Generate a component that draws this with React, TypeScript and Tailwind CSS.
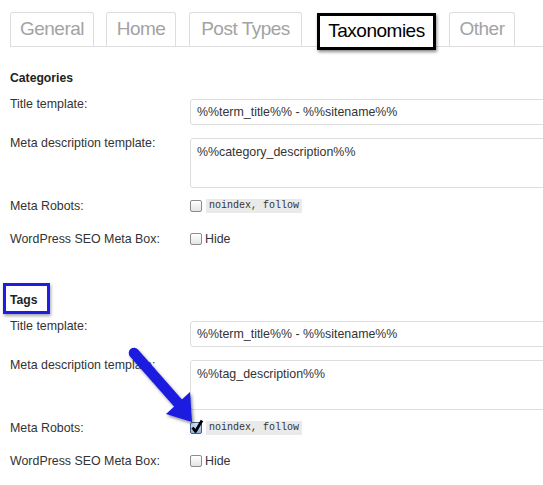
import React from 'react';

type TabDef = { label: string; width: string; gap: string; active?: boolean };

const TABS: TabDef[] = [
  { label: 'General', width: 'w-[84px]', gap: 'ml-0' },
  { label: 'Home', width: 'w-[70px]', gap: 'ml-[12px]' },
  { label: 'Post Types', width: 'w-[113px]', gap: 'ml-[13px]' },
  { label: 'Taxonomies', width: 'w-[119px]', gap: 'ml-[15px]', active: true },
  { label: 'Other', width: 'w-[66px]', gap: 'ml-[13px]' },
];

// タブ
const Tab: React.FC<{ tab: TabDef }> = ({ tab }) => {
  if (tab.active) {
    return (
      <div
        className={`${tab.width} ${tab.gap} relative z-10 -mb-[4px] h-[37px] shrink-0 flex items-center justify-center bg-white border-[3px] border-black text-black text-[19px] tracking-[-0.5px] shadow-[1px_2px_3px_rgba(0,0,0,0.45)]`}
      >
        {tab.label}
      </div>
    );
  }
  return (
    <div
      className={`${tab.width} ${tab.gap} h-[34px] shrink-0 flex items-center justify-center border border-b-0 border-[#dddddd] rounded-t-[3px] bg-white text-[#a3a3a3] text-[19px] tracking-[-0.5px]`}
    >
      {tab.label}
    </div>
  );
};

// チェックボックス（Mac風）
const Checkbox: React.FC<{ checked?: boolean }> = ({ checked }) => {
  if (checked) {
    return (
      <span className="relative w-3 h-3 shrink-0 rounded-[2px] border border-[#3f5f8a] bg-linear-to-b from-[#d3e4f7] to-[#8fb4e0]">
        <svg className="absolute -left-[1px] -top-[4px] w-[14px] h-[15px]" viewBox="0 0 14 15">
          <path d="M2.5 8.5 L5.5 12.5 L12 1.5" fill="none" stroke="#000" strokeWidth="2.8" strokeLinejoin="round" />
        </svg>
      </span>
    );
  }
  return (
    <span className="w-3 h-3 shrink-0 rounded-[2px] border border-[#8c8c8c] bg-linear-to-b from-white to-[#e4e4e4]" />
  );
};

const Label: React.FC<{ children: React.ReactNode }> = ({ children }) => (
  <div className="w-[180px] shrink-0 text-[12.4px] leading-4 text-[#333]">{children}</div>
);

interface SectionProps {
  title: string;
  description: string;
  robotsChecked?: boolean;
  highlight?: boolean;
  className?: string;
}

const Section: React.FC<SectionProps> = ({ title, description, robotsChecked, highlight, className }) => (
  <div className={className}>
    <h3 className="h-4 text-[12.2px] leading-4 font-bold text-[#222]">
      <span className="relative">
        {title}
        {highlight && (
          <span className="absolute -left-[7px] -top-[10px] w-[47px] h-[31px] border-[3px] border-[#1d1de6] shadow-[1px_2px_3px_rgba(0,0,0,0.35)]" />
        )}
      </span>
    </h3>

    <div className="mt-[10px] flex items-start">
      <Label>Title template:</Label>
      <input
        readOnly
        value="%%term_title%% - %%sitename%%"
        className="mt-[3px] w-[400px] h-[26px] shrink-0 px-[6px] border border-[#dddddd] rounded-[3px] bg-white text-[12.4px] text-[#333] outline-none"
      />
    </div>

    <div className="mt-[10px] flex items-start">
      <Label>Meta description template:</Label>
      <textarea
        readOnly
        value={description}
        className="mt-[3px] w-[400px] h-[50px] shrink-0 px-[6px] pt-[5px] border border-[#dddddd] rounded-[3px] bg-white text-[12.4px] leading-4 text-[#333] resize-none outline-none"
      />
    </div>

    <div className="mt-[10px] flex items-center">
      <Label>Meta Robots:</Label>
      <div className="flex items-center gap-[4px]">
        <Checkbox checked={robotsChecked} />
        <code className="px-[3px] h-[14px] leading-[14px] bg-[#eaeaea] text-[10px] text-[#333] font-['Liberation_Mono',monospace]">
          noindex, follow
        </code>
      </div>
    </div>

    <div className="mt-[17px] flex items-center">
      <Label>WordPress SEO Meta Box:</Label>
      <div className="flex items-center gap-[3px]">
        <Checkbox />
        <span className="text-[12.4px] leading-4 text-[#333]">Hide</span>
      </div>
    </div>
  </div>
);

export default function App() {
  return (
    <div className="relative w-[543px] h-[485px] overflow-hidden bg-white font-['Liberation_Sans',Arial,sans-serif] text-[#333]">
      {/* タブバー */}
      <div className="mt-[12px] ml-[10px] flex items-end border-b border-[#dddddd]">
        {TABS.map((tab) => (
          <Tab key={tab.label} tab={tab} />
        ))}
      </div>

      {/* 設定フォーム */}
      <div className="pl-[10px]">
        <Section className="mt-[23px]" title="Categories" description="%%category_description%%" />
        <Section
          className="mt-[45px]"
          title="Tags"
          description="%%tag_description%%"
          robotsChecked
          highlight
        />
      </div>

      {/* 注釈の矢印 */}
      <svg className="absolute left-0 top-0 w-[543px] h-[485px] pointer-events-none" viewBox="0 0 543 485">
        <defs>
          <filter id="arrowShadow" x="-20%" y="-20%" width="150%" height="150%">
            <feDropShadow dx="1.5" dy="2" stdDeviation="1.5" floodColor="#000" floodOpacity="0.45" />
          </filter>
        </defs>
        <g filter="url(#arrowShadow)">
          <line x1="134" y1="353" x2="178" y2="403" stroke="#1b1be0" strokeWidth="10.5" strokeLinecap="round" />
          <polygon points="192,422 166,414 190,392" fill="#1b1be0" />
        </g>
      </svg>
    </div>
  );
}
